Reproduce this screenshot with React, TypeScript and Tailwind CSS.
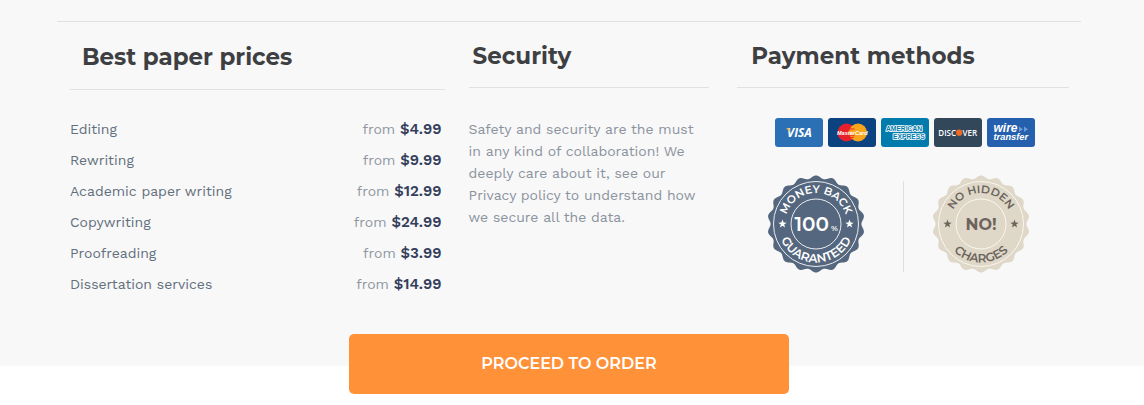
import React from "react";

const prices = [
  { name: "Editing", price: "$4.99" },
  { name: "Rewriting", price: "$9.99" },
  { name: "Academic paper writing", price: "$12.99" },
  { name: "Copywriting", price: "$24.99" },
  { name: "Proofreading", price: "$3.99" },
  { name: "Dissertation services", price: "$14.99" },
];

function scallop(lobes: number, mid: number, depth: number) {
  const steps = 360;
  const points: string[] = [];
  for (let i = 0; i < steps; i++) {
    const a = (i / steps) * Math.PI * 2;
    const r = mid + depth * Math.cos(lobes * a);
    points.push(`${(49 + r * Math.sin(a)).toFixed(2)} ${(49 - r * Math.cos(a)).toFixed(2)}`);
  }
  return `M${points.join("L")}Z`;
}

const starPath =
  "M0 -4.4L1.1 -1.4L4.2 -1.3L1.7 .6L2.6 3.6L0 1.8L-2.6 3.6L-1.7 .6L-4.2 -1.3L-1.1 -1.4Z";

type SealProps = {
  id: string;
  top: string;
  bottom: string;
  fill: string;
  line: string;
  ink: string;
  children: React.ReactNode;
};

function Seal({ id, top, bottom, fill, line, ink, children }: SealProps) {
  return (
    <svg
      viewBox="0 0 98 98"
      role="img"
      aria-label={`${top} ${bottom}`}
      className="size-[98px] shrink-0 font-['Montserrat','Inter',sans-serif] font-semibold"
    >
      <path d={scallop(18, 47, 1.6)} fill={fill} />
      <circle cx="49" cy="49" r="42.5" fill="none" stroke={line} strokeWidth="1" />
      <circle cx="49" cy="49" r="25" fill="none" stroke={line} strokeWidth="1" />
      <path id={`${id}-top`} d="M18 49A31 31 0 0 1 80 49" fill="none" />
      <path id={`${id}-bottom`} d="M10.5 49A38.5 38.5 0 0 0 87.5 49" fill="none" />
      <g fill={ink} textAnchor="middle">
        <text fontSize="11">
          <textPath href={`#${id}-top`} startOffset="50%">{top}</textPath>
        </text>
        <text fontSize="12">
          <textPath href={`#${id}-bottom`} startOffset="50%">{bottom}</textPath>
        </text>
      </g>
      <path d={starPath} transform="translate(15.5 49)" fill={ink} />
      <path d={starPath} transform="translate(82.5 49)" fill={ink} />
      {children}
    </svg>
  );
}

const cardClass = "h-[29px] w-12 shrink-0 rounded-[3px]";

function Cards() {
  return (
    <div className="flex gap-[5px] pl-1">
      <svg viewBox="0 0 48 29" role="img" aria-label="Visa" className={`${cardClass} bg-[#2b70b5]`}>
        <text x="24.5" y="18.8" textAnchor="middle" fontSize="12" className="font-['Open_Sans',sans-serif] font-bold italic" fill="#fff">VISA</text>
        <path d="M11 10.3h3.4l1 4.2z" fill="#f0b44c" />
      </svg>
      <svg viewBox="0 0 48 29" role="img" aria-label="MasterCard" className={`${cardClass} bg-[#0a4380]`}>
        <circle cx="18.5" cy="14.5" r="9" fill="#e8202c" />
        <circle cx="30" cy="14.5" r="9" fill="#f9a51b" />
        <path d="M21.5 11h5M21 17.7h5.5M22 19.7h4" stroke="#e8202c" strokeWidth=".9" />
        <text x="24.3" y="16.7" textAnchor="middle" fontSize="5.6" className="font-['Liberation_Sans',sans-serif] font-bold italic" fill="#fff">MasterCard</text>
      </svg>
      <svg viewBox="0 0 48 29" role="img" aria-label="American Express" className={`${cardClass} bg-[#007bab]`}>
        <g fill="#007bab" stroke="#fff" strokeWidth="1.7" paintOrder="stroke" strokeLinejoin="round" fontSize="6.7" className="font-['Liberation_Sans',sans-serif] font-bold">
          <text x="5" y="13.3">AMERICAN</text>
          <text x="12" y="21.2">EXPRESS</text>
        </g>
      </svg>
      <svg viewBox="0 0 48 29" role="img" aria-label="Discover" className={`${cardClass} bg-[#33475b]`}>
        <g fill="#fff" fontSize="8" className="font-['Open_Sans',sans-serif] font-semibold">
          <text x="4.3" y="17.5">DISC</text>
          <text x="28.5" y="17.5">VER</text>
        </g>
        <circle cx="25.2" cy="14.7" r="3.1" fill="#f26a21" />
      </svg>
      <svg viewBox="0 0 48 29" role="img" aria-label="Wire transfer" className={`${cardClass} bg-[#2560ae]`}>
        <g fill="#fff" className="font-['Liberation_Sans',sans-serif] font-bold italic">
          <text x="6.5" y="14" fontSize="12">wire</text>
          <text x="6.5" y="21.6" fontSize="9.3">transfer</text>
        </g>
        <path d="M32 8.5l4 2.7-4 2.7zM37 8.5l4 2.7-4 2.7z" fill="#6c9bd8" />
      </svg>
    </div>
  );
}

const headingClass =
  "border-b border-[#dfe2e3] font-['Montserrat','Noto_Sans',sans-serif] text-[23px] leading-8 font-bold text-[#3d3f42]";

export default function App() {
  return (
    <div className="min-h-screen bg-white font-['Work_Sans','Noto_Sans',sans-serif] text-sm">
      <section className="bg-[#f8f8f8] pt-[21px] pr-[63px] pb-[66px] pl-[57px]">
        <div className="grid grid-cols-[399fr_269fr_332fr] border-t border-[#dfe2e3] pr-3 pl-[13px]">
          <div className="pr-6">
            <h2 className={`${headingClass} px-3 pt-[19px] pb-4`}>Best paper prices</h2>
            <ul className="pt-6">
              {prices.map((item) => (
                <li key={item.name} className="flex h-[31px] items-baseline justify-between pr-[3px] leading-[31px]">
                  <span className="text-[#626f7c]">{item.name}</span>
                  <span className="text-[#8f979f]">
                    from <b className="text-[15px] font-semibold text-[#34405c]">{item.price}</b>
                  </span>
                </li>
              ))}
            </ul>
          </div>
          <div className="pr-7">
            <h2 className={`${headingClass} px-1 pt-[18px] pb-[15px]`}>Security</h2>
            <p className="pt-[30px] leading-[22px] text-[#8b939e]">
              Safety and security are the must in any kind of collaboration! We deeply care about it, see our Privacy
              policy to understand how we secure all the data.
            </p>
          </div>
          <div>
            <h2 className={`${headingClass} px-[14px] pt-[18px] pb-[15px]`}>Payment methods</h2>
            <div className="flex flex-col items-center pt-[30px]">
              <Cards />
              <div className="flex items-center pt-7 pr-[10px]">
                <Seal id="money-back" top="MONEY BACK" bottom="GUARANTEED" fill="#55677e" line="#e9edf1" ink="#fff">
                  <text x="27.5" y="55.5" fontSize="20" fill="#fff">100</text>
                  <text x="64" y="55.5" fontSize="8" fill="#fff">%</text>
                </Seal>
                <div className="mt-1 mr-7 ml-[38px] h-[91px] w-px bg-[#dddfe1]" />
                <Seal id="no-hidden" top="NO HIDDEN" bottom="CHARGES" fill="#dfd8c8" line="#faf7ed" ink="#6c645d">
                  <text x="49" y="55" fontSize="16" textAnchor="middle" className="font-bold" fill="#6c645d">NO!</text>
                </Seal>
              </div>
            </div>
          </div>
        </div>
      </section>
      <div className="-mt-8 flex justify-center pr-[6px]">
        <button
          type="button"
          className="relative h-15 w-[440px] rounded-[5px] bg-[#ff9138] font-['Montserrat','Inter',sans-serif] text-base font-semibold text-white"
        >
          PROCEED TO ORDER
        </button>
      </div>
    </div>
  );
}
